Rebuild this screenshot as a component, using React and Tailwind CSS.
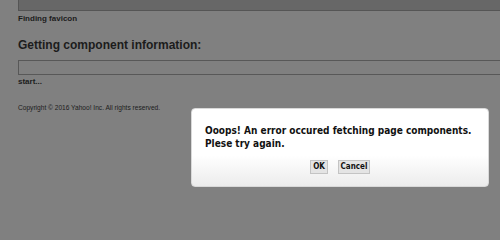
export default function App() {
  return (
    <div className="relative h-[240px] w-[500px] overflow-hidden bg-[#808080] font-['Liberation_Sans',Arial,sans-serif] text-[#1c1c1c]">
      {/* page content (greyed out behind the dialog) */}
      <div className="pl-[18px]">
        <div className="h-[11px] w-[600px] border border-t-0 border-[#555555] bg-[#676767]" />
        <p className="mt-[3px] text-[8px] font-bold leading-[10px]">Finding favicon</p>
        <h2 className="mt-[14px] text-[12px] font-bold leading-[14px]">Getting component information:</h2>
        <div className="mt-[8px] h-[15px] w-[600px] border border-[#585858]" />
        <p className="mt-[2px] text-[8px] font-bold leading-[10px]">start...</p>
        <p className="mt-[17px] text-[6.6px] leading-[8px]">Copyright © 2016 Yahoo! Inc. All rights reserved.</p>
      </div>

      {/* error dialog */}
      <div className="absolute left-[191px] top-[108px] flex h-[79px] w-[298px] flex-col rounded-[4px] border border-[#d9d9d9] bg-gradient-to-b from-white from-60% to-[#ececec] px-[13px] pt-[15px] font-['DejaVu_Sans_Condensed','DejaVu_Sans',sans-serif] text-[#111]">
        <p className="whitespace-nowrap text-[10px] font-bold leading-[13px]">
          Ooops! An error occured fetching page components.
          <br />
          Plese try again.
        </p>
        <div className="mt-[10px] flex justify-center gap-[10px]">
          <button className="h-[14px] w-[18px] border border-[#c4c4c4] bg-[#e4e4e4] text-[8px] font-bold leading-[12px]">OK</button>
          <button className="h-[14px] w-[32px] border border-[#c4c4c4] bg-[#e4e4e4] text-[8px] font-bold leading-[12px]">Cancel</button>
        </div>
      </div>
    </div>
  );
}
